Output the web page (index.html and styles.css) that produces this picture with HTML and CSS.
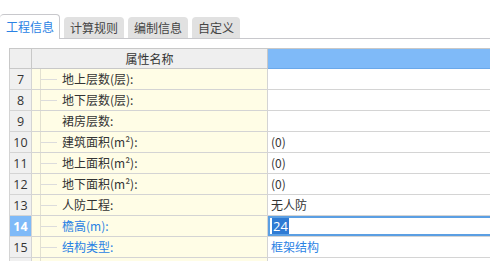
FILE: index.html
```html
<!DOCTYPE html>
<html>
<head>
<meta charset="utf-8">
<link rel="stylesheet" href="styles.css">
</head>
<body>
<div class="tabs">
  <div class="tab active">工程信息</div>
  <div class="tab">计算规则</div>
  <div class="tab">编制信息</div>
  <div class="tab">自定义</div>
</div>
<div class="grid-wrap">
<table class="grid">
  <colgroup><col class="c-num"><col class="c-name"><col class="c-val"></colgroup>
  <tr class="head"><th></th><th>属性名称</th><th class="sel-head"></th></tr>
  <tr><td class="num">7</td><td class="name"><span class="tree branch"></span>地上层数(层):</td><td class="val"></td></tr>
  <tr><td class="num">8</td><td class="name"><span class="tree branch"></span>地下层数(层):</td><td class="val"></td></tr>
  <tr><td class="num">9</td><td class="name"><span class="tree"></span>裙房层数:</td><td class="val"></td></tr>
  <tr><td class="num">10</td><td class="name"><span class="tree branch"></span>建筑面积(m²):</td><td class="val">(0)</td></tr>
  <tr><td class="num">11</td><td class="name"><span class="tree branch"></span>地上面积(m²):</td><td class="val">(0)</td></tr>
  <tr><td class="num">12</td><td class="name"><span class="tree branch"></span>地下面积(m²):</td><td class="val">(0)</td></tr>
  <tr><td class="num">13</td><td class="name"><span class="tree branch"></span>人防工程:</td><td class="val">无人防</td></tr>
  <tr><td class="num cur">14</td><td class="name blue"><span class="tree branch"></span>檐高(m):</td><td class="val edit"><div class="editor"><span class="selected">24</span></div></td></tr>
  <tr><td class="num">15</td><td class="name blue"><span class="tree branch"></span>结构类型:</td><td class="val blue">框架结构</td></tr>
  <tr><td class="num"></td><td class="name"><span class="tree"></span></td><td class="val"></td></tr>
</table>
</div>
</body>
</html>
```
FILE: styles.css
```css
html, body {
  margin: 0;
  padding: 0;
  background: #ffffff;
  overflow: hidden;
  font-family: "Noto Sans CJK SC", "Noto Sans", sans-serif;
  font-size: 12px;
  color: #333333;
}

.tabs {
  display: flex;
  align-items: flex-end;
  padding-top: 14px;
  height: 24px;
  border-bottom: 1px solid #c8c8cc;
}

.tab {
  height: 21px;
  line-height: 21px;
  padding: 0 6px;
  margin-left: 4px;
  background: #e1e1e1;
  color: #444444;
  border-radius: 4px 4px 0 0;
  white-space: nowrap;
}

.tab.active {
  margin-left: 0;
  margin-bottom: -1px;
  box-sizing: border-box;
  width: 60px;
  height: 25px;
  line-height: 24px;
  text-align: center;
  padding: 0 6px;
  background: #ffffff;
  color: #2a82e4;
  border: 1px solid #c8c8cc;
  border-bottom: none;
  border-left: none;
}

.grid-wrap {
  padding: 9px 0 0 9px;
}

.grid {
  border-collapse: collapse;
  table-layout: fixed;
  width: 500px;
}

.c-num { width: 22px; }
.c-name { width: 236px; }

.grid th, .grid td {
  border: 1px solid #d4d4d4;
  padding: 0;
  height: 20px;
  white-space: nowrap;
  overflow: hidden;
}

.grid tr.head th {
  height: 19px;
  background: #efefef;
  font-weight: normal;
  color: #333333;
  text-align: center;
  border-color: #c8c8c8;
}

.grid tr.head th.sel-head {
  background: #7fbaf8;
  border-bottom: 1px solid #6aa8ea;
}

.num {
  background: #f0f0f0;
  text-align: center;
  font-family: "Open Sans", "Noto Sans", sans-serif;
  font-size: 12.5px;
  color: #333333;
}

.num.cur {
  background: #7fbaf8;
  color: #ffffff;
  font-weight: bold;
}

.name {
  background: #fffde6;
  line-height: 20px;
}

.name.blue, .val.blue {
  color: #2a82e4;
}

.tree {
  display: inline-block;
  position: relative;
  vertical-align: top;
  width: 30px;
  height: 20px;
}

.tree::before {
  content: "";
  position: absolute;
  left: 8px;
  top: -1px;
  bottom: -1px;
  border-left: 1px solid #e2e0d0;
}

.tree.branch::after {
  content: "";
  position: absolute;
  left: 9px;
  width: 16px;
  top: 10px;
  border-top: 1px solid #dcdcdc;
}

.val {
  padding-left: 3px !important;
  line-height: 20px;
  background: #ffffff;
}

.val.edit {
  padding: 0 !important;
}

.editor {
  height: 16px;
  border: 2px solid #5b9fe3;
  padding-left: 2px;
  line-height: 16px;
}

.selected {
  background: #2f7bd4;
  color: #ffffff;
  display: inline-block;
  font-family: "Open Sans", "Noto Sans", sans-serif;
  font-size: 13px;
  line-height: 16px;
  padding: 0 1px;
}
```
